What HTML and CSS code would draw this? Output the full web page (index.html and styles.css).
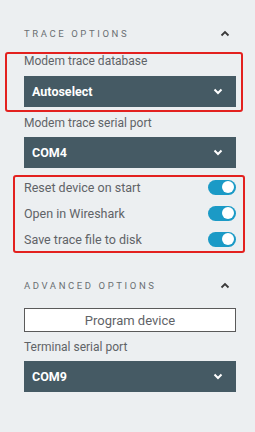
FILE: index.html
```html
<!DOCTYPE html>
<html lang="en">
<head>
  <meta charset="UTF-8">
  <title>Trace options</title>
  <link rel="stylesheet" href="styles.css">
</head>
<body>
<div class="panel">

  <div class="section-head">
    <span class="section-title">Trace options</span>
    <svg class="chev-up" width="10" height="7" viewBox="0 0 10 7"><path d="M1.5 5.5 L5 2 L8.5 5.5" fill="none" stroke="#3a3a3a" stroke-width="1.8"/></svg>
  </div>

  <div class="mark mark-db">
    <label class="label">Modem trace database</label>
    <div class="select">
      <span>Autoselect</span>
      <svg width="10" height="7" viewBox="0 0 10 7"><path d="M1.5 1.5 L5 5 L8.5 1.5" fill="none" stroke="#fff" stroke-width="2"/></svg>
    </div>
  </div>

  <label class="label label-port">Modem trace serial port</label>
  <div class="select">
    <span>COM4</span>
    <svg width="10" height="7" viewBox="0 0 10 7"><path d="M1.5 1.5 L5 5 L8.5 1.5" fill="none" stroke="#fff" stroke-width="2"/></svg>
  </div>

  <div class="mark mark-toggles">
    <div class="toggle-row">
      <span>Reset device on start</span>
      <span class="toggle on"></span>
    </div>
    <div class="toggle-row">
      <span>Open in Wireshark</span>
      <span class="toggle on"></span>
    </div>
    <div class="toggle-row">
      <span>Save trace file to disk</span>
      <span class="toggle on"></span>
    </div>
  </div>

  <div class="section-head advanced">
    <span class="section-title">Advanced options</span>
    <svg class="chev-up" width="10" height="7" viewBox="0 0 10 7"><path d="M1.5 5.5 L5 2 L8.5 5.5" fill="none" stroke="#3a3a3a" stroke-width="1.8"/></svg>
  </div>

  <button class="btn">Program device</button>

  <label class="label label-term">Terminal serial port</label>
  <div class="select">
    <span>COM9</span>
    <svg width="10" height="7" viewBox="0 0 10 7"><path d="M1.5 1.5 L5 5 L8.5 1.5" fill="none" stroke="#fff" stroke-width="2"/></svg>
  </div>

</div>
</body>
</html>
```

FILE: styles.css
```css
body {
  margin: 0;
  background: #eceff1;
  font-family: Roboto, "Liberation Sans", sans-serif;
  color: #5f6367;
}
.panel {
  width: 212px;
  padding: 26px 19px 0 24px;
}
.section-head {
  display: flex;
  justify-content: space-between;
  align-items: center;
  height: 14px;
}
.section-title {
  font-size: 9.5px;
  letter-spacing: 2.6px;
  text-transform: uppercase;
  color: #6b6f73;
}
.chev-up { margin-right: 6px; }
.advanced { margin-top: 25px; }

.mark {
  border: 2px solid #e3211f;
  border-radius: 3px;
}
.mark-db {
  margin: 12px -7px 0 -19px;
  padding: 0 5px 3px 17px;
}
.mark-toggles {
  margin: 7px -9px 0 -11px;
  padding: 0 7px 2px 9px;
  display: flex;
  flex-direction: column;
  gap: 6px;
}

.label {
  display: block;
  font-size: 12px;
  line-height: 14px;
  margin-bottom: 8px;
}
.label-port { margin-top: 4px; margin-bottom: 7px; }
.label-term { margin-top: 8px; margin-bottom: 7px; }

.select {
  height: 31px;
  background: #455a64;
  color: #fff;
  font-weight: bold;
  font-size: 12.5px;
  display: flex;
  align-items: center;
  justify-content: space-between;
  padding: 0 13px 0 8px;
}

.toggle-row {
  height: 20px;
  display: flex;
  align-items: center;
  justify-content: space-between;
  font-size: 12.5px;
}
.toggle {
  position: relative;
  width: 28px;
  height: 15px;
  border-radius: 8px;
  background: #1b9ac6;
}
.toggle.on::after {
  content: "";
  position: absolute;
  right: 2px;
  top: 1.5px;
  width: 12px;
  height: 12px;
  border-radius: 50%;
  background: #fff;
}

.btn {
  display: block;
  width: 100%;
  height: 24px;
  margin-top: 16px;
  background: #fff;
  border: 1px solid #5a5a5a;
  font-family: inherit;
  font-size: 13px;
  color: #5f6367;
  padding: 0;
}
```
